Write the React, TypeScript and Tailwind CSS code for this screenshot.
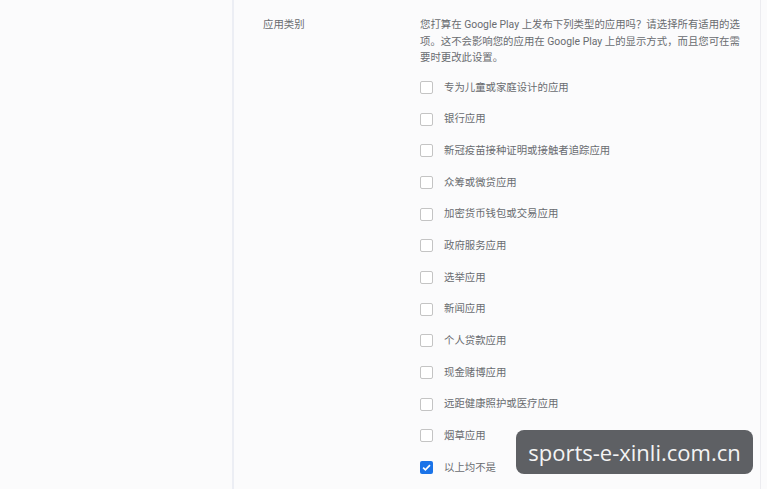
import React from 'react';

const categories = [
  '专为儿童或家庭设计的应用',
  '银行应用',
  '新冠疫苗接种证明或接触者追踪应用',
  '众筹或微贷应用',
  '加密货币钱包或交易应用',
  '政府服务应用',
  '选举应用',
  '新闻应用',
  '个人贷款应用',
  '现金赌博应用',
  '远距健康照护或医疗应用',
  '烟草应用',
  '以上均不是',
];

const font = { fontFamily: 'Roboto, "Noto Sans CJK SC", sans-serif' };

const Checkbox = ({ checked }: { checked: boolean }) =>
  checked ? (
    <span className="flex h-[13px] w-[13px] items-center justify-center rounded-[2px] bg-[#1a73e8]">
      <svg viewBox="0 0 12 12" className="h-[11px] w-[11px]">
        <path d="M2.3 6.2 4.8 8.6 9.8 3.4" fill="none" stroke="#fff" strokeWidth="1.8" />
      </svg>
    </span>
  ) : (
    <span className="block h-[13px] w-[13px] rounded-[2px] border-[1.5px] border-[#c4c4c4] bg-white" />
  );

export default function App() {
  return (
    <div
      className="relative flex h-[489px] w-[767px] overflow-hidden bg-[#fbfbfc] text-[10.4px] text-[#696c70]"
      style={font}
    >
      {/* side navigation area */}
      <div className="w-[234px] shrink-0 border-r-2 border-[#eceef4]" />

      {/* form section */}
      <div className="flex w-[527px] shrink-0 border-r border-[#ececf0] pl-[29px] pt-[17px]">
        <div className="w-[157px] shrink-0 leading-[16px]">应用类别</div>
        <div className="flex flex-col">
          <p className="leading-[16.5px]">
            <span className="block whitespace-nowrap">您打算在 Google Play 上发布下列类型的应用吗？请选择所有适用的选</span>
            <span className="block whitespace-nowrap">项。这不会影响您的应用在 Google Play 上的显示方式，而且您可在需</span>
            <span className="block whitespace-nowrap">要时更改此设置。</span>
          </p>
          <ul className="mt-[5px] flex flex-col">
            {categories.map((label, i) => (
              <li key={label} className="flex h-[31.7px] items-center gap-[11px]">
                <Checkbox checked={i === categories.length - 1} />
                <span>{label}</span>
              </li>
            ))}
          </ul>
        </div>
      </div>

      {/* watermark */}
      <div
        className="absolute left-[516px] top-[430px] flex h-[44px] w-[237px] items-center justify-center whitespace-nowrap rounded-[8px] bg-[#5e6064] text-[22px] text-[#f4f4f4]"
        style={{ fontFamily: '"Open Sans", sans-serif' }}
      >
        sports-e-xinli.com.cn
      </div>
    </div>
  );
}
